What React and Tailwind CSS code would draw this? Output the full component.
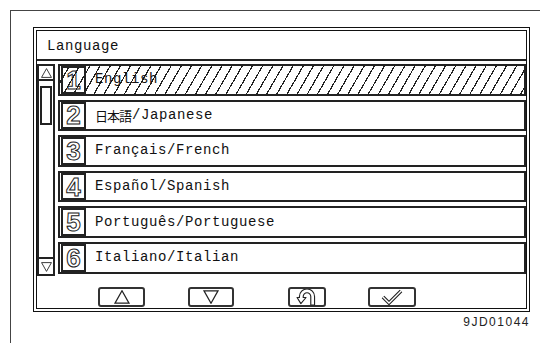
import React from "react";

const rows = [
  { n: "1", label: "English", active: true },
  { n: "2", cjk: "日本語", label: "/Japanese" },
  { n: "3", label: "Français/French" },
  { n: "4", label: "Español/Spanish" },
  { n: "5", label: "Português/Portuguese" },
  { n: "6", label: "Italiano/Italian" },
];

const Tri = ({ down = false, w = 11, h = 10 }) => (
  <svg width={w} height={h} viewBox="0 0 20 18">
    <polygon
      points={down ? "1,1 19,1 10,17" : "1,17 19,17 10,1"}
      fill="none"
      stroke="#222"
      strokeWidth="1.6"
    />
  </svg>
);

const BackIcon = () => (
  <svg width="22" height="17" viewBox="0 0 22 18">
    <path
      d="M15 17 L15 8 A4 4 0 0 0 7 8 L7 9 L10 9 L4.5 15.5 L0.5 9 L3 9 L3 8 A8 8 0 0 1 19 8 L19 17 Z"
      fill="white"
      stroke="#222"
      strokeWidth="1.2"
      strokeLinejoin="round"
    />
  </svg>
);

const CheckIcon = () => (
  <svg width="24" height="17" viewBox="0 0 24 17">
    <polyline points="3,8 9,14 21,2" fill="none" stroke="#222" strokeWidth="3.6" />
    <polyline points="3,8 9,14 21,2" fill="none" stroke="white" strokeWidth="1.4" />
  </svg>
);

const Row = ({ n, label, cjk, active }) => (
  <div
    className={`flex h-[31.6px] items-stretch border-2 border-[#222] ${
      active
        ? "bg-[repeating-linear-gradient(120deg,transparent_0_7.6px,#222_7.6px_8.8px)]"
        : "bg-white"
    }`}
  >
    <div className="ml-[1px] flex w-[25px] items-center justify-center border-2 border-[#222]">
      <span className="font-['Liberation_Sans',sans-serif] text-[26px] leading-none font-bold text-transparent [-webkit-text-stroke:1px_#222]">
        {n}
      </span>
    </div>
    <div className="flex items-center pl-[9px] font-['Liberation_Mono',monospace] text-[14px] tracking-[0.6px] text-[#111]">
      {cjk && (
        <span className="mr-[1px] font-['Noto_Sans_CJK_JP',sans-serif] text-[13px] tracking-[-1px]">
          {cjk}
        </span>
      )}
      <span>{label}</span>
    </div>
  </div>
);

export default function App() {
  return (
    <div className="h-[343px] w-[541px] overflow-hidden bg-white">
      <div className="ml-[10px] mt-[10px] h-[333px] w-[530px] border-l border-t border-[#444] pl-[22px] pt-[16px]">
        <div className="flex h-[285px] w-[497px] flex-col border-[4px] border-double border-[#111]">
          <div className="flex h-[30px] items-center border-b-2 border-[#222] pl-[10px] pt-[2px] font-['Liberation_Mono',monospace] text-[14px] tracking-[0.6px] text-[#111]">
            Language
          </div>

          <div className="mt-[3px] flex h-[212px]">
            <div className="flex w-[18px] flex-col border-2 border-[#222]">
              <div className="flex h-[15px] items-center justify-center border-b-2 border-[#222]">
                <Tri />
              </div>
              <div className="flex-1 px-[1px] pt-[5px]">
                <div className="h-[39px] border-2 border-[#222]" />
              </div>
              <div className="flex h-[17px] items-center justify-center border-t-2 border-[#222]">
                <Tri down />
              </div>
            </div>
            <div className="ml-[3px] flex flex-1 flex-col gap-[4px]">
              {rows.map((r) => (
                <Row key={r.n} {...r} />
              ))}
            </div>
          </div>

          <div className="mt-[11px] flex h-[20px]">
            <div className="ml-[61px] flex w-[47px] items-center justify-center rounded-[3px] border-2 border-[#333]">
              <Tri w={18} h={14} />
            </div>
            <div className="ml-[43px] flex w-[46px] items-center justify-center rounded-[3px] border-2 border-[#333]">
              <Tri down w={18} h={14} />
            </div>
            <div className="ml-[54px] flex w-[38px] items-center justify-center rounded-[3px] border-2 border-[#333]">
              <BackIcon />
            </div>
            <div className="ml-[42px] flex w-[48px] items-center justify-center rounded-[3px] border-2 border-[#333]">
              <CheckIcon />
            </div>
          </div>
        </div>
        <div className="w-[497px] pt-[1px] text-right font-['Liberation_Sans',sans-serif] text-[12px] tracking-[1.5px] text-[#222]">
          9JD01044
        </div>
      </div>
    </div>
  );
}
